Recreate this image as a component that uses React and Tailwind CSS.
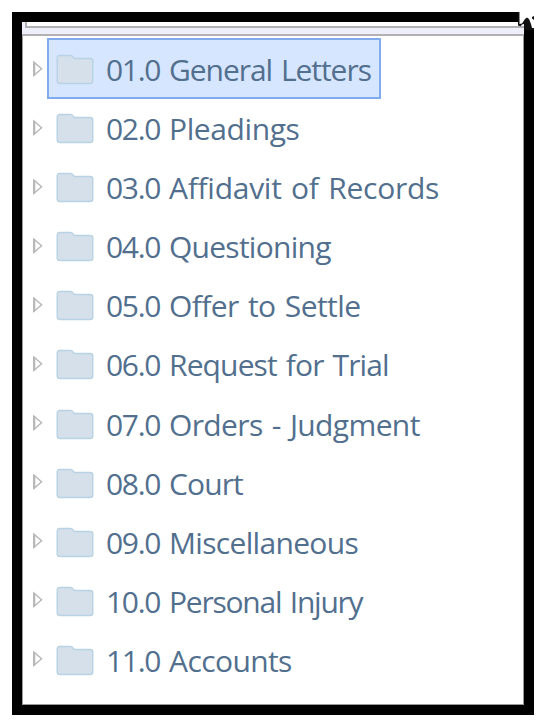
import React from 'react'

const folders = [
  { number: '01.0', name: 'General Letters', selected: true, tracking: 'tracking-[-1.04px]' },
  { number: '02.0', name: 'Pleadings', tracking: 'tracking-[-0.4px]' },
  { number: '03.0', name: 'Affidavit of Records', tracking: 'tracking-[-0.27px]' },
  { number: '04.0', name: 'Questioning', tracking: 'tracking-[-0.74px]' },
  { number: '05.0', name: 'Offer to Settle', tracking: 'tracking-[-0.57px]' },
  { number: '06.0', name: 'Request for Trial', tracking: 'tracking-[-0.87px]' },
  { number: '07.0', name: 'Orders - Judgment', tracking: 'tracking-[-0.63px]' },
  { number: '08.0', name: 'Court', tracking: 'tracking-[-0.88px]' },
  { number: '09.0', name: 'Miscellaneous', tracking: 'tracking-[-0.68px]' },
  { number: '10.0', name: 'Personal Injury', tracking: 'tracking-[-1.24px]' },
  { number: '11.0', name: 'Accounts', tracking: 'tracking-[-0.59px]' },
]

function ExpandArrow() {
  return (
    <svg className="ml-[10px] mt-[21.5px] h-[18px] w-[12px] shrink-0" viewBox="0 0 12 18" fill="none">
      <path d="M1.8 2V15.5L9.6 8.7Z" fill="#fff" stroke="#b8b8b8" strokeWidth="1.4" />
      <path d="M2.2 2v13.5" stroke="#b8b8b8" strokeWidth="2.2" />
    </svg>
  )
}

function FolderIcon() {
  return (
    <svg className="mt-[14px] h-[31px] w-[38px] shrink-0" viewBox="0 0 38 31" fill="none">
      <path
        d="M3.5 1.5H14.5Q16 1.5 17 3L18.5 4.5H34Q36.8 4.5 36.8 7V27Q36.8 29.5 34 29.5H4Q1.2 29.5 1.2 27V4Q1.2 1.5 3.5 1.5Z"
        fill="#d5e0ea"
        stroke="#b9d3e4"
        strokeWidth="1.4"
      />
    </svg>
  )
}

function FolderRow({ number, name, selected, tracking }) {
  return (
    <li className="flex h-[59.1px] items-start">
      <ExpandArrow />
      <div
        className={`ml-[3px] flex h-[61px] items-start border-2 pl-[7px] ${selected ? 'w-[334px] border-[#80abed] bg-[#d6e6fe]' : 'border-transparent'}`}
      >
        <FolderIcon />
        <div className="ml-[12px] mt-[9px] flex whitespace-nowrap text-[30px] leading-[42px]">
          <span className="w-[63px] shrink-0 tracking-[-1.3px]">{number}</span>
          <span className={`[word-spacing:2px] ${tracking}`}>{name}</span>
        </div>
      </div>
    </li>
  )
}

export default function App() {
  return (
    <div className="relative h-[723px] w-[547px] overflow-hidden bg-white p-3 font-['Open_Sans','Noto_Sans',sans-serif] text-[#526f8e]">
      <div className="h-[703px] w-[522px] border-10 border-black bg-white shadow-[inset_0_0_0_1px_#9a9a9a]">
        <div className="h-[14px] border-b-2 border-[#b0b0b5] bg-[#efeffa]">
          <div className="ml-[3px] h-[6px] border-b-2 border-l-2 border-[#b0b0b5] bg-white" />
        </div>
        <ul className="mt-[2px]">
          {folders.map((folder) => (
            <FolderRow key={folder.name} {...folder} />
          ))}
        </ul>
      </div>
      {/* ragged corner of the frame */}
      <svg className="absolute left-[518px] top-[10px] h-[20px] w-[18px]" viewBox="0 0 18 20">
        <path d="M1 0H18V20H6V16H1Z" fill="#fff" />
        <path d="M0 2H1.5V14L4 13.5L7 9L9 7.5L11 9L13 14L14 18H16V20H6V14L4 14.5L2.5 16.3L0 15.5Z" fill="#111" />
        <path d="M14 7L16 6V10L14 8.5Z" fill="#111" />
      </svg>
    </div>
  )
}
